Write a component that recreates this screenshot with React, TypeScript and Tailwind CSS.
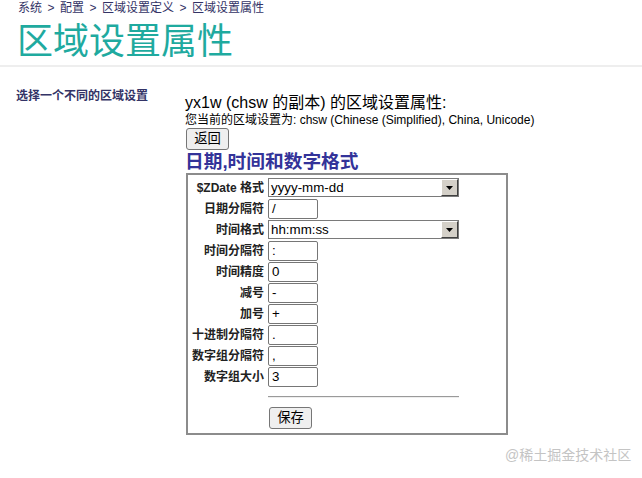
import React from "react";

const font = "font-['Liberation_Sans','Noto_Sans_CJK_SC',sans-serif]";

function Select({ value }: { value: string }) {
  return (
    <div className="flex h-[19px] w-[191px] items-stretch border border-[#7a7a7a] bg-white">
      <div className="flex flex-1 items-center pl-[2px] text-[13.33px] leading-none text-black">{value}</div>
      <div className="flex w-[17px] items-center justify-center border-t border-l border-t-white border-l-white border-r border-b border-r-[#404040] border-b-[#404040] bg-[#d4d0c8]">
        <svg width="7" height="4" viewBox="0 0 7 4">
          <polygon points="0,0 7,0 3.5,4" fill="#000" />
        </svg>
      </div>
    </div>
  );
}

function Input({ value }: { value: string }) {
  return (
    <div className="flex h-[20px] w-[50px] items-center rounded-[2px] border border-[#767676] bg-white pl-[3px] text-[13.33px] leading-none text-black">
      {value}
    </div>
  );
}

const rows: { label: string; kind: "select" | "input"; value: string }[] = [
  { label: "$ZDate 格式", kind: "select", value: "yyyy-mm-dd" },
  { label: "日期分隔符", kind: "input", value: "/" },
  { label: "时间格式", kind: "select", value: "hh:mm:ss" },
  { label: "时间分隔符", kind: "input", value: ":" },
  { label: "时间精度", kind: "input", value: "0" },
  { label: "减号", kind: "input", value: "-" },
  { label: "加号", kind: "input", value: "+" },
  { label: "十进制分隔符", kind: "input", value: "." },
  { label: "数字组分隔符", kind: "input", value: "," },
  { label: "数字组大小", kind: "input", value: "3" },
];

export default function App() {
  return (
    <div className={`relative h-[478px] w-[642px] overflow-hidden bg-white ${font}`}>
      <div className="border-b-2 border-[#eeeeee] pb-[1px]">
        <div className="flex items-center pl-[18px] pt-[1px] text-[12px] leading-[14px] text-[#333366]">
          <span>系统</span>
          <span className="px-[5.5px]">&gt;</span>
          <span>配置</span>
          <span className="px-[5.5px]">&gt;</span>
          <span>区域设置定义</span>
          <span className="px-[5.5px]">&gt;</span>
          <span>区域设置属性</span>
        </div>
        <div className="pl-[17px] pt-[4px] text-[36px] leading-[45px] text-[#1faa9f]">区域设置属性</div>
      </div>

      <div className="flex">
        <div className="w-[185px] shrink-0 pl-[16px] pt-[22px] text-[12px] font-bold leading-[14px] text-[#333366]">
          选择一个不同的区域设置
        </div>
        <div className="flex flex-col pt-[27px]">
          <div className="text-[16px] leading-[18px] text-black">yx1w (chsw 的副本) 的区域设置属性:</div>
          <div className="mt-[1px] text-[12px] leading-[14px] text-black">
            您当前的区域设置为: chsw (Chinese (Simplified), China, Unicode)
          </div>
          <div className="ml-[1px] mt-[1px]">
            <button className="flex h-[22px] w-[43px] items-center justify-center rounded-[3px] border border-[#767676] bg-[#efefef] text-[13.33px] leading-none text-black">
              返回
            </button>
          </div>
          <div className="mt-[1px] text-[18.72px] font-bold leading-[22px] text-[#333399]">日期,时间和数字格式</div>
          <div className="ml-[1px] flex h-[262px] w-[322px] flex-col border-2 border-[#8c8c8c] pt-[2px]">
            <div className="flex flex-col">
              {rows.map((r) => (
                <div key={r.label} className="flex h-[21px] items-center">
                  <div className="w-[77px] pr-[1px] text-right text-[12px] font-bold leading-none text-[#222222]">
                    {r.label}
                  </div>
                  <div className="ml-[3px]">
                    {r.kind === "select" ? <Select value={r.value} /> : <Input value={r.value} />}
                  </div>
                </div>
              ))}
            </div>
            <div className="ml-[80px] mt-[9px] h-[2px] w-[191px] border-t border-t-[#9a9a9a] border-b border-b-[#eeeeee]" />
            <div className="ml-[81px] mt-[9px]">
              <button className="flex h-[22px] w-[43px] items-center justify-center rounded-[3px] border border-[#767676] bg-[#efefef] text-[13.33px] leading-none text-black">
                保存
              </button>
            </div>
          </div>
        </div>
      </div>

      <div className="absolute left-[505px] top-[446px] text-[14px] leading-[18px] text-[#c4c4c4]">@稀土掘金技术社区</div>
    </div>
  );
}
